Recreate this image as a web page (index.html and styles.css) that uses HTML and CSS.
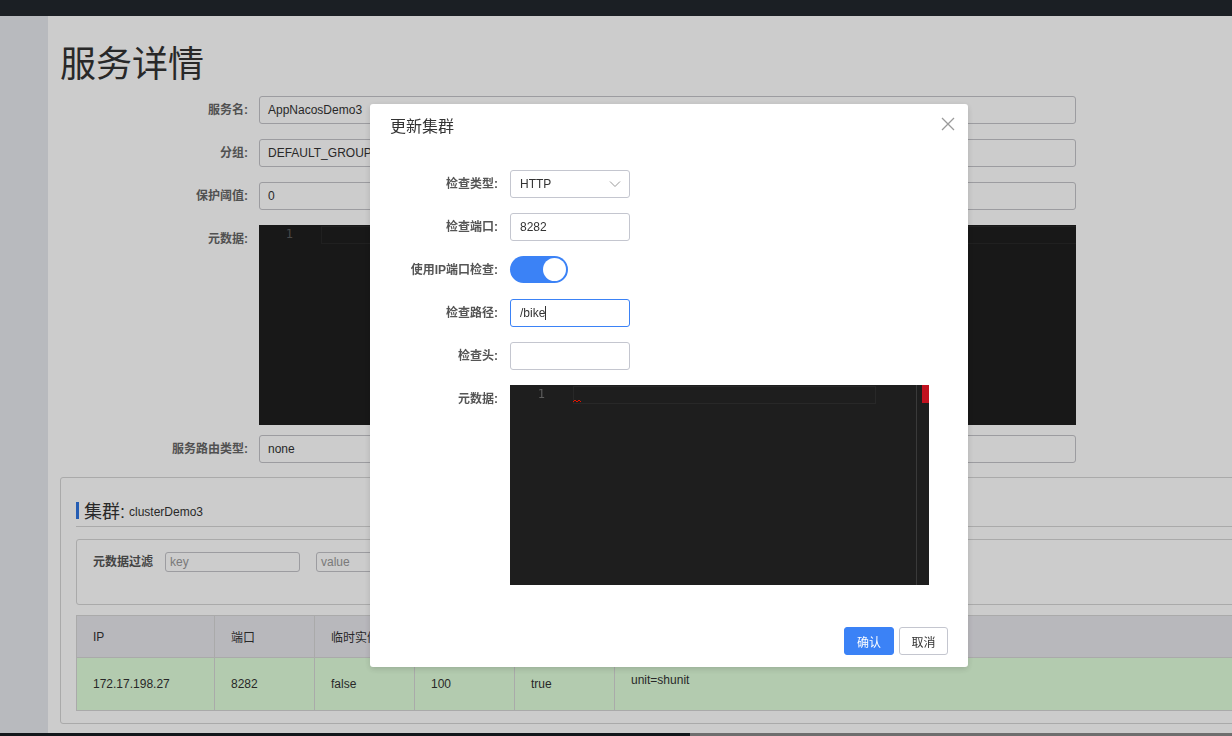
FILE: index.html
```html
<!DOCTYPE html>
<html lang="zh-CN">
<head>
    <meta charset="UTF-8">
    <title>服务详情</title>
    <link rel="stylesheet" href="styles.css">
</head>
<body>
    <div class="topbar"></div>
    <div class="layout">
        <div class="sidebar"></div>
        <div class="main">
            <h1 class="page-title">服务详情</h1>

            <div class="detail-form">
                <label class="form-label">服务名:</label>
                <div class="form-input">AppNacosDemo3</div>

                <label class="form-label">分组:</label>
                <div class="form-input">DEFAULT_GROUP</div>

                <label class="form-label">保护阈值:</label>
                <div class="form-input">0</div>

                <label class="form-label">元数据:</label>
                <div class="code-editor big">
                    <div class="gutter">1</div>
                    <div class="code-area"><div class="current-line"></div></div>
                </div>

                <label class="form-label route-label">服务路由类型:</label>
                <div class="form-input route-input">none</div>
            </div>

            <div class="cluster-panel">
                <div class="cluster-title">
                    <span class="title-bar"></span>
                    <span class="title-main">集群:</span>
                    <span class="title-sub">clusterDemo3</span>
                </div>

                <div class="filter-box">
                    <span class="filter-label">元数据过滤</span>
                    <div class="filter-input">key</div>
                    <div class="filter-input wide">value</div>
                </div>

                <table class="instance-table">
                    <thead>
                        <tr>
                            <th class="col-ip">IP</th>
                            <th class="col-sm">端口</th>
                            <th class="col-sm">临时实例</th>
                            <th class="col-sm">权重</th>
                            <th class="col-sm">健康状态</th>
                            <th>元数据</th>
                        </tr>
                    </thead>
                    <tbody>
                        <tr>
                            <td>172.17.198.27</td>
                            <td>8282</td>
                            <td>false</td>
                            <td>100</td>
                            <td>true</td>
                            <td class="meta-cell">unit=shunit</td>
                        </tr>
                    </tbody>
                </table>
            </div>
        </div>
    </div>
    <div class="bottom-strip"><span class="strip-dark"></span></div>

    <!-- 弹窗遮罩 -->
    <div class="mask"></div>

    <div class="dialog">
        <div class="dialog-header">
            <span>更新集群</span>
            <svg class="close-icon" width="14" height="14" viewBox="0 0 14 14">
                <path d="M1 1 L13 13 M13 1 L1 13" stroke="#9a9a9a" stroke-width="1.3" fill="none"/>
            </svg>
        </div>
        <div class="dialog-body">
            <label class="dlg-label">检查类型:</label>
            <div class="dlg-input select">
                <span>HTTP</span>
                <svg width="12" height="8" viewBox="0 0 12 8">
                    <path d="M1 1.5 L6 6.5 L11 1.5" stroke="#999" stroke-width="1" fill="none"/>
                </svg>
            </div>

            <label class="dlg-label">检查端口:</label>
            <div class="dlg-input">8282</div>

            <label class="dlg-label">使用IP端口检查:</label>
            <div class="switch-row"><span class="switch on"><span class="knob"></span></span></div>

            <label class="dlg-label">检查路径:</label>
            <div class="dlg-input focused">/bike<span class="caret"></span></div>

            <label class="dlg-label">检查头:</label>
            <div class="dlg-input"></div>

            <label class="dlg-label">元数据:</label>
            <div class="code-editor small">
                <div class="gutter">1</div>
                <div class="code-area">
                    <div class="current-line"></div>
                    <svg class="squiggle" width="8" height="4" viewBox="0 0 8 4">
                        <path d="M0 3 L2 1 L4 3 L6 1 L8 3" stroke="#e51400" stroke-width="1" fill="none"/>
                    </svg>
                </div>
                <div class="overview"><span class="marker"></span></div>
            </div>
        </div>
        <div class="dialog-footer">
            <button class="btn primary">确认</button>
            <button class="btn">取消</button>
        </div>
    </div>
</body>
</html>
```

FILE: styles.css
```css
html, body {
    margin: 0;
    height: 100%;
}
body {
    font-family: "Liberation Sans", "Noto Sans CJK SC", sans-serif;
    font-size: 12px;
    color: #333;
    overflow: hidden;
    display: flex;
    flex-direction: column;
    background: #fff;
}
.topbar {
    height: 16px;
    flex: none;
    background: #22272d;
}
.layout {
    flex: 1;
    display: flex;
    min-height: 0;
}
.sidebar {
    width: 48px;
    flex: none;
    background: #e6e9ee;
}
.main {
    flex: 1;
    padding-left: 12px;
    min-width: 0;
}
.page-title {
    margin: 0;
    padding-top: 24px;
    font-size: 36px;
    font-weight: normal;
    line-height: 50px;
    color: #333;
}

/* 服务详情表单 */
.detail-form {
    display: grid;
    grid-template-columns: 188px 817px;
    column-gap: 11px;
    row-gap: 15px;
    margin-top: 6px;
}
.form-label {
    text-align: right;
    font-weight: bold;
    color: #666;
    line-height: 28px;
}
.form-input {
    height: 28px;
    box-sizing: border-box;
    border: 1px solid #c3c3c8;
    border-radius: 3px;
    padding: 0 8px;
    line-height: 26px;
    color: #333;
}
.route-label,
.route-input {
    margin-top: -5px;
}

/* 代码编辑器 */
.code-editor {
    height: 200px;
    background: #1e1e1e;
    display: flex;
    font-family: "DejaVu Sans Mono", "Liberation Mono", monospace;
    font-size: 12px;
}
.code-editor .gutter {
    width: 62px;
    flex: none;
    box-sizing: border-box;
    padding-right: 28px;
    text-align: right;
    color: #5c5c5c;
    line-height: 18px;
}
.code-editor .code-area {
    flex: 1;
    position: relative;
}
.current-line {
    height: 16px;
    margin-top: 1px;
    border: 1px solid #282828;
    border-right: none;
}
.code-editor.small {
    width: 419px;
}
.code-editor.small .gutter {
    width: 63px;
}
.code-editor.small .code-area {
    flex: none;
    width: 343px;
}
.code-editor.small .current-line {
    border-right: 1px solid #282828;
    margin-right: 40px;
}
.squiggle {
    position: absolute;
    left: 0;
    top: 14px;
}
.overview {
    flex: 1;
    border-left: 1px solid #3a3a3a;
    display: flex;
    justify-content: flex-end;
}
.overview .marker {
    width: 7px;
    height: 18px;
    background: #c1121f;
}

/* 集群面板 */
.cluster-panel {
    margin-top: 14px;
    width: 1200px;
    box-sizing: border-box;
    border: 1px solid #d5d5d5;
    border-radius: 3px;
    padding: 0 15px 12px;
}
.cluster-title {
    display: flex;
    align-items: center;
    height: 32px;
    margin-top: 16px;
    border-bottom: 1px solid #d5d5d5;
}
.title-bar {
    width: 3px;
    height: 17px;
    background: #2f75e0;
    margin-right: 5px;
}
.title-main {
    font-size: 18px;
    color: #333;
    margin-right: 4px;
}
.title-sub {
    font-size: 12px;
    color: #333;
    padding-top: 3px;
}
.filter-box {
    margin-top: 12px;
    height: 66px;
    box-sizing: border-box;
    border: 1px solid #d5d5d5;
    border-radius: 3px;
    padding: 12px 16px 0;
    display: flex;
    align-items: flex-start;
    gap: 16px;
}
.filter-label {
    font-weight: bold;
    color: #555;
    line-height: 20px;
    margin-right: -4px;
}
.filter-input {
    width: 135px;
    height: 20px;
    box-sizing: border-box;
    border: 1px solid #c3c3c8;
    border-radius: 3px;
    padding: 0 4px;
    line-height: 18px;
    color: #999;
    font-size: 12px;
}
.filter-input.wide {
    width: 200px;
}
.instance-table {
    margin-top: 10px;
    width: 100%;
    border-collapse: collapse;
    font-size: 12px;
}
.instance-table th,
.instance-table td {
    border: 1px solid #d5d5d5;
    text-align: left;
    padding: 0 16px;
    font-weight: normal;
    color: #333;
}
.instance-table th {
    height: 41px;
    background: #e7e6ec;
}
.instance-table td {
    height: 52px;
    background: #e0fedb;
}
.instance-table .col-ip {
    width: 105px;
}
.instance-table .col-sm {
    width: 67px;
}
.instance-table .meta-cell {
    vertical-align: top;
    height: 37px;
    padding-top: 15px;
}
.bottom-strip {
    height: 3px;
    flex: none;
    background: #8a8a8a;
    display: flex;
}
.strip-dark {
    width: 690px;
    background: #181d22;
}

/* 遮罩和弹窗 */
.mask {
    position: fixed;
    inset: 0;
    background: rgba(0, 0, 0, 0.2);
}
.dialog {
    position: fixed;
    left: 370px;
    top: 104px;
    width: 598px;
    background: #fff;
    border-radius: 3px;
    box-shadow: 0 2px 6px rgba(0, 0, 0, 0.15);
}
.dialog-header {
    display: flex;
    justify-content: space-between;
    align-items: center;
    padding: 12px 13px 12px 20px;
    line-height: 22px;
    font-size: 16px;
    color: #333;
}
.close-icon {
    margin-top: -7px;
}
.dialog-body {
    display: grid;
    grid-template-columns: 108px 419px;
    column-gap: 12px;
    row-gap: 15px;
    padding: 20px 20px 42px;
}
.dlg-label {
    text-align: right;
    font-weight: bold;
    color: #555;
    line-height: 28px;
}
.dlg-input {
    width: 120px;
    height: 28px;
    box-sizing: border-box;
    border: 1px solid #c4c6cf;
    border-radius: 3px;
    padding: 0 9px;
    line-height: 26px;
    font-size: 12px;
    color: #333;
}
.dlg-input.select {
    display: flex;
    justify-content: space-between;
    align-items: center;
    padding-right: 8px;
}
.dlg-input.focused {
    border-color: #3b82f6;
}
.caret {
    display: inline-block;
    width: 1px;
    height: 14px;
    background: #333;
    vertical-align: -3px;
}
.switch-row {
    height: 28px;
}
.switch {
    display: inline-flex;
    justify-content: flex-end;
    align-items: center;
    width: 58px;
    height: 27px;
    box-sizing: border-box;
    padding: 2px;
    border-radius: 14px;
    background: #3b82f6;
}
.knob {
    width: 23px;
    height: 23px;
    border-radius: 50%;
    background: #fff;
}
.dialog-footer {
    display: flex;
    justify-content: flex-end;
    gap: 5px;
    padding: 0 20px 12px;
}
.btn {
    height: 28px;
    width: 49px;
    border: 1px solid #c4c6cf;
    border-radius: 3px;
    background: #fff;
    color: #333;
    font-family: inherit;
    font-size: 12px;
    padding: 0;
}
.btn.primary {
    width: 50px;
    background: #3b82f6;
    border-color: #3b82f6;
    color: #fff;
}
```
